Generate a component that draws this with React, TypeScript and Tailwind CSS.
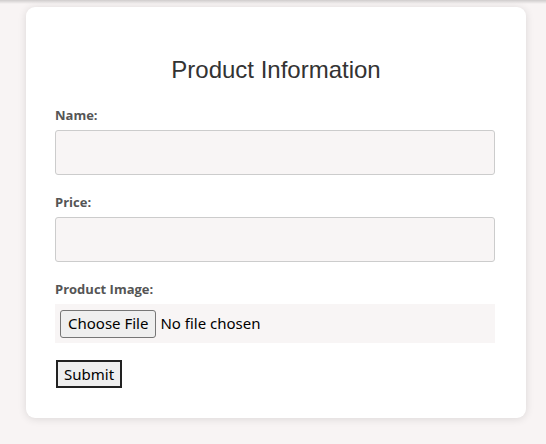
import React from "react";

const labelCls = "block text-[13px] font-bold leading-[15px] text-[#555] font-['Open_Sans','Noto_Sans',sans-serif]";
const inputCls = "block w-[440px] h-[45px] rounded-[3px] border border-[#ccc] bg-[#f8f5f5] px-2 outline-none";

export default function App() {
  return (
    <div className="min-h-[444px] bg-[#f8f4f4] relative">
      {/* faint shadow from the bar above */}
      <div className="absolute left-0 right-0 top-0 h-[4px] bg-gradient-to-b from-[#cfcccc] to-transparent" />
      <div className="pt-[7px] pl-[26px]">
        <div className="w-[500px] rounded-[9px] bg-white px-[29px] pt-[49px] pb-[30px] shadow-[0_1px_8px_rgba(0,0,0,0.12)]">
          <h2 className="text-center text-[24px] leading-[28px] text-[#333] font-['Liberation_Sans',Arial,sans-serif]">
            Product Information
          </h2>
          <form className="mt-[24px]" onSubmit={(e) => e.preventDefault()}>
            <label className={labelCls}>Name:</label>
            <input type="text" className={`${inputCls} mt-[7px]`} />

            <label className={`${labelCls} mt-[20px]`}>Price:</label>
            <input type="text" className={`${inputCls} mt-[7px]`} />

            <label className={`${labelCls} mt-[20px]`}>Product Image:</label>
            <div className="mt-[7px] flex h-[39px] w-[440px] items-center bg-[#f8f5f5] pl-[5px] font-['Noto_Sans','Open_Sans',sans-serif] text-[15px] text-black">
              <span className="flex h-[28px] items-center rounded-[3px] border border-[#767676] bg-[#efefef] px-[7px]">
                Choose File
              </span>
              <span className="ml-[4px]">No file chosen</span>
            </div>

            <button
              type="submit"
              className="mt-[17px] ml-[1px] flex h-[28px] items-center border-2 border-[#222] bg-[#efefef] px-[6px] font-['Noto_Sans','Open_Sans',sans-serif] text-[15px] text-black"
            >
              Submit
            </button>
          </form>
        </div>
      </div>
    </div>
  );
}
